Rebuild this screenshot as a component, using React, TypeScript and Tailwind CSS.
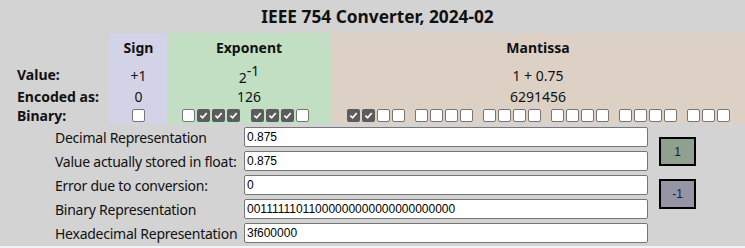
import React from "react";

const font = { fontFamily: '"Noto Sans", "Open Sans", sans-serif' };

const Box = ({ on }: { on: boolean }) =>
  on ? (
    <span className="flex h-[13px] w-[13px] items-center justify-center rounded-[2px] bg-[#5c5c5c]">
      <svg width="9" height="9" viewBox="0 0 10 10">
        <path d="M1.5 5.2 L4 7.6 L8.6 2.2" fill="none" stroke="white" strokeWidth="1.9" />
      </svg>
    </span>
  ) : (
    <span className="h-[13px] w-[13px] rounded-[2px] border border-[#767676] bg-white" />
  );

const Bits = ({ bits, gap }: { bits: string; gap: string }) => {
  const groups: string[] = [];
  for (let i = 0; i < bits.length; i += 4) groups.push(bits.slice(i, i + 4));
  return (
    <div className={`flex ${gap}`}>
      {groups.map((g, gi) => (
        <div key={gi} className="flex gap-[2px]">
          {g.split("").map((b, bi) => (
            <Box key={bi} on={b === "1"} />
          ))}
        </div>
      ))}
    </div>
  );
};

const fields = [
  { label: "Decimal Representation", value: "0.875" },
  { label: "Value actually stored in float:", value: "0.875" },
  { label: "Error due to conversion:", value: "0" },
  { label: "Binary Representation", value: "00111111011000000000000000000000" },
  { label: "Hexadecimal Representation", value: "3f600000" },
];

export default function App() {
  return (
    <div className="min-h-screen bg-[#f2f5f8]" style={font}>
      <div className="h-[246px] bg-[#d3d3d3] text-[14px] text-[#111]">
        <div className="flex h-[33px] items-center justify-center pl-[10px] text-[17.3px] font-bold">
          IEEE 754 Converter, 2024-02
        </div>

        <div className="grid grid-cols-[110px_57px_164px_1fr] grid-rows-[29px_24px_20px_18px]">
          {/* header */}
          <div />
          <div className="flex items-center justify-center bg-[#d3d3e7] font-bold">Sign</div>
          <div className="flex items-center justify-center bg-[#c2dfc3] font-bold">Exponent</div>
          <div className="flex items-center justify-center bg-[#ddd1c6] font-bold">Mantissa</div>

          {/* value */}
          <div className="flex items-center pl-[17px] font-bold">Value:</div>
          <div className="flex items-center justify-center bg-[#d3d3e7] pt-[2px]">+1</div>
          <div className="flex items-center justify-center bg-[#c2dfc3] pt-[6px]">
            <span>
              2<sup className="relative -top-[7px] align-baseline text-[14px]">-1</sup>
            </span>
          </div>
          <div className="flex items-center justify-center bg-[#ddd1c6] pt-[2px]">1 + 0.75</div>

          {/* encoded */}
          <div className="flex items-center pl-[17px] font-bold">Encoded as:</div>
          <div className="flex items-center justify-center bg-[#d3d3e7]">0</div>
          <div className="flex items-center justify-center bg-[#c2dfc3]">126</div>
          <div className="flex items-center justify-center bg-[#ddd1c6]">6291456</div>

          {/* binary */}
          <div className="flex items-center pl-[17px] font-bold">Binary:</div>
          <div className="flex items-center justify-center bg-[#d3d3e7]">
            <Box on={false} />
          </div>
          <div className="flex items-center justify-center bg-[#c2dfc3] pr-[7px]">
            <Bits bits="01111110" gap="gap-[11px]" />
          </div>
          <div className="flex items-center justify-center bg-[#ddd1c6]">
            <Bits bits="11000000000000000000000" gap="gap-[10px]" />
          </div>
        </div>

        <div className="flex pl-[55px] pt-[3px]">
          <div className="flex flex-col gap-[4px]">
            {fields.map((f) => (
              <div key={f.label} className="flex h-[20px] items-center">
                <span className="w-[189px] whitespace-nowrap tracking-[-0.25px]">{f.label}</span>
                <input
                  readOnly
                  value={f.value}
                  className="h-[20px] w-[404px] rounded-[2px] border border-[#767676] bg-white px-[2px] text-[12px] text-black outline-none"
                  style={{ fontFamily: '"Liberation Sans", Arial, sans-serif' }}
                />
              </div>
            ))}
          </div>
          <div
            className="ml-[11px] flex flex-col gap-[13px] pt-[10px] text-[12px] text-[#1a1a40]"
            style={{ fontFamily: '"Liberation Sans", Arial, sans-serif' }}
          >
            <button className="h-[29px] w-[37px] border-2 border-black bg-[#8fa08f]">1</button>
            <button className="h-[30px] w-[37px] border-2 border-black bg-[#9595a6]">-1</button>
          </div>
        </div>
      </div>
    </div>
  );
}
